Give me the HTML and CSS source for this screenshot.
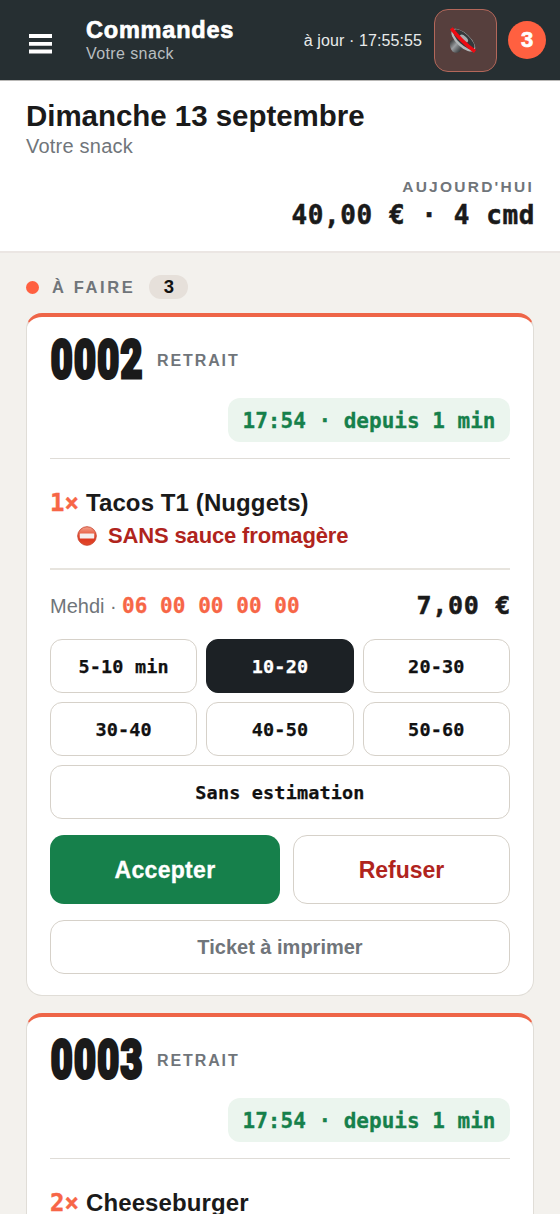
FILE: index.html
```html
<!DOCTYPE html>
<html lang="fr">
<head>
<meta charset="utf-8">
<title>Commandes</title>
<meta name="viewport" content="width=device-width">
<link rel="stylesheet" href="styles.css">
</head>
<body>
<header class="topbar">
  <svg class="menu" width="23" height="20" viewBox="0 0 23 20"><path d="M0 2h23M0 9.8h23M0 17.5h23" stroke="#fff" stroke-width="3.8"/></svg>
  <div class="brand">
    <div class="brand-name">Commandes</div>
    <div class="brand-sub">Votre snack</div>
  </div>
  <span class="sync">à jour · 17:55:55</span>
  <button class="sound" aria-label="Son">
    <svg width="28" height="28" viewBox="0 0 28 28">
      <defs>
        <linearGradient id="metal" x1="0" y1="0" x2="1" y2="1"><stop offset="0" stop-color="#222"/><stop offset=".45" stop-color="#9a9ea1"/><stop offset="1" stop-color="#1d2022"/></linearGradient>
      </defs>
      <path d="M7 11 17 23 11 23.500 5 17z" fill="#4a4e51"/>
      <path d="M2 15.500q2-2.500 5-1.500l6.500 7.500-1.500 4q-4 2.500-7.500 0-3.500-4.500-2.500-10z" fill="url(#metal)"/>
      <ellipse cx="15.300" cy="14.200" rx="15" ry="6.800" transform="rotate(43 15.300 14.200)" fill="#b4b8ba"/>
      <ellipse cx="16" cy="13.400" rx="13.500" ry="5.400" transform="rotate(43 16 13.400)" fill="#34383a"/>
      <ellipse cx="16" cy="12.500" rx="5" ry="2.400" transform="rotate(43 16 12.500)" fill="#a8acae"/>
      <path d="M3.300 2.300Q13 15 27 25.500" fill="none" stroke="#ec0a12" stroke-width="3.600"/>
    </svg>
  </button>
  <span class="count">3</span>
</header>

<section class="day">
  <h1 class="day-title">Dimanche 13 septembre</h1>
  <div class="day-sub">Votre snack</div>
  <div class="day-label">AUJOURD'HUI</div>
  <div class="day-total">40,00 € · 4 cmd</div>
</section>

<main class="board">
  <div class="column-head">
    <span class="dot"></span>
    <span class="column-title">À FAIRE</span>
    <span class="column-count">3</span>
  </div>

  <article class="card">
    <div class="card-head"><span class="number"><span class="number-text">0002</span></span><span class="mode">RETRAIT</span></div>
    <div class="timer">17:54 · depuis 1 min</div>
    <div class="items">
      <div class="item"><span class="qty">1×</span><span>Tacos T1 (Nuggets)</span></div>
      <div class="without">
        <svg width="20" height="20" viewBox="0 0 20 20">
          <defs><linearGradient id="sign" x1="0" y1="0" x2="0" y2="1"><stop offset="0" stop-color="#f3a18c"/><stop offset=".35" stop-color="#e9674c"/><stop offset=".65" stop-color="#dc3820"/><stop offset="1" stop-color="#e34a2c"/></linearGradient></defs>
          <circle cx="10" cy="10" r="9.300" fill="url(#sign)" stroke="#c9452f" stroke-width=".9"/>
          <rect x="2.800" y="7.500" width="14.400" height="5" rx=".6" fill="#f6efee"/>
        </svg>
        <span>SANS sauce fromagère</span>
      </div>
    </div>
    <div class="customer"><span class="name">Mehdi ·</span><span class="phone">06 00 00 00 00</span><span class="price">7,00 €</span></div>
    <div class="delays">
      <button class="delay">5-10 min</button>
      <button class="delay selected">10-20</button>
      <button class="delay">20-30</button>
      <button class="delay">30-40</button>
      <button class="delay">40-50</button>
      <button class="delay">50-60</button>
      <button class="delay wide">Sans estimation</button>
    </div>
    <div class="actions">
      <button class="accept">Accepter</button>
      <button class="refuse">Refuser</button>
    </div>
    <button class="ticket">Ticket à imprimer</button>
  </article>

  <article class="card">
    <div class="card-head"><span class="number"><span class="number-text">0003</span></span><span class="mode">RETRAIT</span></div>
    <div class="timer">17:54 · depuis 1 min</div>
    <div class="items">
      <div class="item"><span class="qty">2×</span><span>Cheeseburger</span></div>
    </div>
  </article>
</main>
</body>
</html>
```
FILE: styles.css
```css
* { box-sizing: border-box; }
html { height: 1214px; overflow: hidden; }
body {
  margin: 0;
  height: 1214px;
  overflow: hidden;
  background: #f3f1ed;
  color: #1a1a1a;
  font-family: "Liberation Sans", Arial, sans-serif;
  white-space: nowrap;
}
button { font: inherit; padding: 0; margin: 0; }

.topbar {
  height: 81px;
  background: #262f32;
  border-bottom: 1px solid #b9b8b6;
  display: flex;
  align-items: center;
  padding: 0 14px 0 29px;
  color: #fff;
}
.menu { display: block; margin: 7px 34px 0 0; }
.brand { flex: 1; padding-top: 1px; }
.brand-name { font-size: 23.5px; line-height: 26px; font-weight: 700; letter-spacing: .8px; -webkit-text-stroke: .7px #fff; }
.brand-sub { font-size: 16px; line-height: 21px; letter-spacing: .4px; color: #b9bec0; }
.sync { font-size: 16px; letter-spacing: .1px; color: #e9ebeb; margin-right: 12px; padding-top: 1px; }
.sound {
  width: 63px;
  height: 63px;
  border: 1px solid #b3675a;
  border-radius: 14px;
  background: #563f3d;
  display: flex;
  align-items: center;
  justify-content: center;
  padding-right: 7px;
  margin-right: 11px;
}
.count {
  width: 38px;
  height: 38px;
  border-radius: 50%;
  background: #ff6040;
  font-size: 22px;
  font-weight: 700;
  -webkit-text-stroke: .7px #fff;
  display: flex;
  align-items: center;
  justify-content: center;
}

.day {
  height: 172px;
  background: #fff;
  border-bottom: 2px solid #ebe6e3;
  padding: 18px 26px 0;
}
.day-title { margin: 0; font-size: 29.5px; line-height: 34px; letter-spacing: -.04px; }
.day-sub { font-size: 20px; line-height: 27px; letter-spacing: .22px; color: #70757a; }
.day-label { margin-top: 18px; text-align: right; font-size: 15.5px; line-height: 18px; font-weight: 700; letter-spacing: 2.25px; color: #70757a; }
.day-total { text-align: right; font: 700 26px/34px "DejaVu Sans Mono", monospace; letter-spacing: .58px; margin-right: -1px; margin-top: 2px; -webkit-text-stroke: .5px #1a1a1a; }

.board { padding: 22px 26px 0; }
.column-head { height: 24px; display: flex; align-items: center; }
.dot { width: 13px; height: 13px; border-radius: 50%; background: #ff6040; margin-right: 13px; }
.column-title { font-size: 16.5px; font-weight: 700; letter-spacing: 2.6px; color: #70757a; margin-right: 14px; }
.column-count {
  width: 39px;
  height: 24px;
  border-radius: 12px;
  background: #e6e0da;
  text-align: center;
  font: 700 18.500px/24px "Liberation Sans", sans-serif;
  color: #111;
}

.card {
  background: #fff;
  border: 1px solid #e0ddd7;
  border-top: 4px solid #ee6548;
  border-radius: 16px;
  margin-top: 14px;
  padding: 20px 23px;
  height: 683px;
}
.card + .card { margin-top: 17px; height: 260px; }
.card-head { display: flex; align-items: center; height: 46px; }
.number { width: 107px; }
.number-text {
  display: inline-block;
  font: 900 54px/46px Roboto, sans-serif;
  transform: scaleX(.7);
  transform-origin: left;
  -webkit-text-stroke: 3.2px #1a1a1a;
  letter-spacing: 1.900px;
  text-indent: 1px;
}
.mode { font-size: 16px; font-weight: 700; letter-spacing: 1.900px; color: #70757a; padding-top: 1px; }
.timer {
  width: 282px;
  height: 44px;
  margin: 15px 0 16px auto;
  border-radius: 12px;
  background: #ebf5ee;
  color: #16804b;
  text-align: center;
  font: 700 21px/46px "DejaVu Sans Mono", monospace;
  -webkit-text-stroke: .3px #16804b;
}
.items { border-top: 1px solid #dfdcd7; height: 110px; padding-top: 28px; }
.item { display: flex; align-items: center; height: 32px; font-size: 24px; font-weight: 700; letter-spacing: .1px; }
.qty { width: 36px; font-family: "DejaVu Sans Mono", monospace; color: #f76647; -webkit-text-stroke: .4px #f76647; }
.without { display: flex; align-items: center; height: 34px; padding-left: 27px; font-size: 22px; font-weight: 700; letter-spacing: -.15px; color: #b0241d; }
.without svg { margin-right: 11px; }
.customer { border-top: 2px solid #e7e4de; height: 71px; padding-top: 3px; display: flex; align-items: center; }
.name { font-size: 20px; width: 72px; color: #70757a; }
.phone { font: 700 21px/30px "DejaVu Sans Mono", monospace; letter-spacing: .05px; color: #f76647; -webkit-text-stroke: .3px #f76647; }
.price { margin-left: auto; font: 700 25px/34px "DejaVu Sans Mono", monospace; letter-spacing: .7px; margin-right: -1px; -webkit-text-stroke: .5px #1a1a1a; }

.delays { display: grid; grid-template-columns: repeat(3, 1fr); gap: 9px; }
.delay, .refuse, .ticket { background: #fff; border: 1px solid #d6d1c9; }
.delay {
  height: 54px;
  border-radius: 12px;
  font: 700 18.500px/52px "DejaVu Sans Mono", monospace;
  letter-spacing: .15px;
  color: #111;
  padding-top: 1px;
  -webkit-text-stroke: .25px currentColor;
}
.selected { background: #1c2125; border-color: #1c2125; color: #fff; }
.wide { grid-column: 1 / -1; }
.actions { display: grid; grid-template-columns: 230px 1fr; gap: 13px; margin-top: 16px; height: 69px; }
.accept, .refuse { border-radius: 14px; font-size: 23px; font-weight: 700; padding-top: 2px; }
.accept { background: #16804b; border: 0; color: #fff; letter-spacing: .3px; -webkit-text-stroke: .3px #fff; }
.refuse { color: #b0241d; }
.ticket { width: 100%; height: 54px; margin-top: 16px; border-radius: 14px; font-size: 20px; font-weight: 700; color: #70757a; padding-top: 1px; }
```
